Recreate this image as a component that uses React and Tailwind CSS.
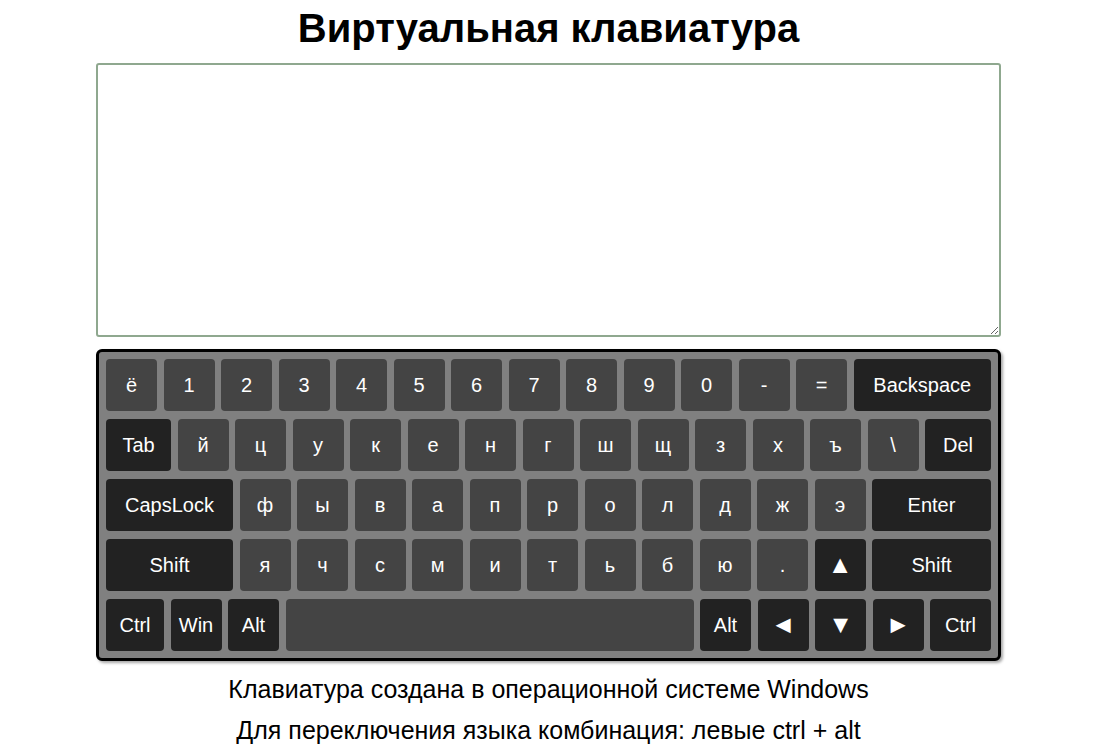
const rows = [
    [
        ...['ё', '1', '2', '3', '4', '5', '6', '7', '8', '9', '0', '-', '='].map((k) => ({ label: k })),
        { label: 'Backspace', dark: true, grow: true },
    ],
    [
        { label: 'Tab', dark: true, w: 'w-[65px]' },
        ...['й', 'ц', 'у', 'к', 'е', 'н', 'г', 'ш', 'щ', 'з', 'х', 'ъ', '\\'].map((k) => ({ label: k })),
        { label: 'Del', dark: true, grow: true },
    ],
    [
        { label: 'CapsLock', dark: true, w: 'w-[127px]' },
        ...['ф', 'ы', 'в', 'а', 'п', 'р', 'о', 'л', 'д', 'ж', 'э'].map((k) => ({ label: k })),
        { label: 'Enter', dark: true, grow: true },
    ],
    [
        { label: 'Shift', dark: true, w: 'w-[127px]' },
        ...['я', 'ч', 'с', 'м', 'и', 'т', 'ь', 'б', 'ю', '.'].map((k) => ({ label: k })),
        { label: '▲', dark: true, arrow: true },
        { label: 'Shift', dark: true, grow: true },
    ],
    [
        { label: 'Ctrl', dark: true, w: 'w-[58px]' },
        { label: 'Win', dark: true },
        { label: 'Alt', dark: true },
        { label: '', grow: true },
        { label: 'Alt', dark: true },
        { label: '◄', dark: true, arrow: true },
        { label: '▼', dark: true, arrow: true },
        { label: '►', dark: true, arrow: true },
        { label: 'Ctrl', dark: true, w: 'w-[61px]' },
    ],
];

const Key = ({ label, dark, grow, w, arrow }) => (
    <button
        className={
            'h-[52px] rounded-[4px] flex items-center justify-center text-white ' +
            (arrow ? 'text-[25px] ' : 'text-[20px] ') +
            (dark ? 'bg-[#222222] ' : 'bg-[#444444] ') +
            (grow ? 'flex-1' : w ? w : 'w-[51px]')
        }
    >
        {label}
    </button>
);

const App = () => {
    return (
        <div className="min-h-screen bg-white font-['Liberation_Sans',Arial,sans-serif] text-black">
            <div className="w-[905px] ml-[96px]">
                <h1 className="pt-[5px] h-[51px] text-center text-[40px] leading-[46px] font-bold mb-[12px]">
                    Виртуальная клавиатура
                </h1>

                <textarea className="block w-full h-[274px] border-2 border-[#8fa88f] rounded-[3px] outline-none p-2 text-[20px]" />

                {/* Keyboard */}
                <div className="mt-[12px] bg-[#808080] border-[3px] border-black rounded-[6px] p-[7px] flex flex-col gap-[8px] shadow-[2px_2px_3px_rgba(0,0,0,0.35)]">
                    {rows.map((row, i) => (
                        <div key={i} className="flex gap-[6.5px]">
                            {row.map((k, j) => (
                                <Key key={j} {...k} />
                            ))}
                        </div>
                    ))}
                </div>

                <div className="text-center text-[25px] mt-[13px] leading-[30px]">
                    <p>Клавиатура создана в операционной системе Windows</p>
                    <p className="mt-[11px]">Для переключения языка комбинация: левые ctrl + alt</p>
                </div>
            </div>
        </div>
    );
};

export default App;
